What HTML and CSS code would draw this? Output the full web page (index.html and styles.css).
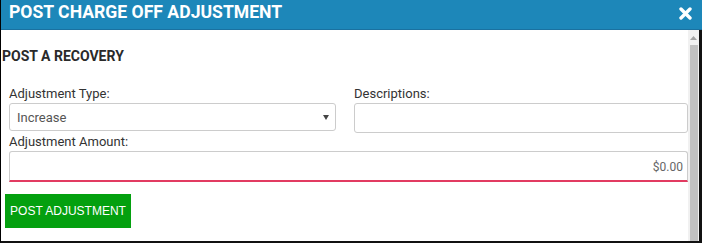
FILE: index.html
```html
<!DOCTYPE html>
<html lang="en">
<head>
    <meta charset="UTF-8">
    <title>Post Charge Off Adjustment</title>
    <link rel="stylesheet" href="styles.css">
</head>
<body>

    <!-- Modal -->
    <div class="modal">
        <div class="modal-header">
            <span class="modal-title">POST CHARGE OFF ADJUSTMENT</span>
            <button class="close" aria-label="Close">
                <svg width="13" height="13" viewBox="0 0 13 13">
                    <path d="M2 2 L11 11 M11 2 L2 11" stroke="#fff" stroke-width="3.4" stroke-linecap="round"/>
                </svg>
            </button>
        </div>

        <div class="modal-body-wrap">
            <div class="modal-body">
                <h3 class="section-title">POST A RECOVERY</h3>

                <div class="form-grid">
                    <div class="field">
                        <label>Adjustment Type:</label>
                        <div class="select-box">
                            <span>Increase</span>
                            <svg class="caret" width="6" height="5" viewBox="0 0 6 5"><path d="M0 0 H6 L3 5 Z" fill="#444"/></svg>
                        </div>
                    </div>
                    <div class="field">
                        <label>Descriptions:</label>
                        <input type="text" class="text-input desc">
                    </div>
                    <div class="field full">
                        <label>Adjustment Amount:</label>
                        <input type="text" class="text-input amount" value="$0.00">
                    </div>
                </div>

                <button class="btn-post">POST ADJUSTMENT</button>
            </div>

            <!-- fake scrollbar -->
            <div class="scrollbar">
                <div class="scroll-up">
                    <svg width="7" height="4" viewBox="0 0 7 4"><path d="M0 4 H7 L3.5 0 Z" fill="#a3a3a3"/></svg>
                </div>
                <div class="scroll-thumb"></div>
            </div>
        </div>
    </div>

</body>
</html>
```

FILE: styles.css
```css
body {
    margin: 0;
    font-family: Roboto, "Liberation Sans", Arial, sans-serif;
    background-color: #fff;
}

.modal {
    width: 702px;
    height: 243px;
    box-sizing: border-box;
    display: flex;
    flex-direction: column;
    border-left: 1px solid #000;
    border-bottom: 2px solid #111;
}

.modal-header {
    height: 30px;
    box-sizing: border-box;
    display: flex;
    justify-content: space-between;
    align-items: flex-start;
    padding: 2px 10px 0 8px;
    background-color: #1d87b9;
    border-bottom: 1px solid #1a71a0;
}

.modal-title {
    color: #fff;
    font-size: 17.6px;
    font-weight: 700;
    line-height: 20px;
}

.close {
    background: none;
    border: none;
    padding: 0;
    margin-top: 5px;
    line-height: 0;
    cursor: pointer;
}

.modal-body-wrap {
    flex: 1;
    display: flex;
    min-height: 0;
    border-right: 3px solid #111;
}

.modal-body {
    flex: 1;
    padding-left: 1px;
}

.section-title {
    margin: 18px 0 21px 0;
    font-size: 14px;
    font-weight: 700;
    line-height: 17px;
    color: #2a2a2a;
}

.form-grid {
    display: grid;
    grid-template-columns: 327px 1fr;
    column-gap: 18px;
    row-gap: 1px;
    padding-left: 7px;
}

.field.full {
    grid-column: 1 / 3;
}

.field label {
    display: block;
    font-size: 13px;
    line-height: 15px;
    color: #333;
    margin-bottom: 2px;
}

.select-box {
    height: 28px;
    box-sizing: border-box;
    display: flex;
    align-items: center;
    justify-content: space-between;
    padding: 0 6px 0 7px;
    border: 1px solid #ccc;
    border-radius: 3px;
    font-size: 13px;
    color: #555;
}

.text-input {
    display: block;
    width: 100%;
    box-sizing: border-box;
    border: 1px solid #ccc;
    border-radius: 3px;
    font-family: Roboto, "Liberation Sans", Arial, sans-serif;
    outline: none;
}

.text-input.desc {
    height: 30px;
}

.text-input.amount {
    height: 31px;
    border-bottom: 2px solid #e23b61;
    border-radius: 3px 3px 0 0;
    text-align: right;
    padding: 2px 4px 0 4px;
    font-size: 12px;
    color: #666;
}

.btn-post {
    margin: 12px 0 0 3px;
    width: 126px;
    height: 34px;
    padding: 0;
    border: none;
    background-color: #04a00f;
    color: #fff;
    font-family: "Liberation Sans", Arial, sans-serif;
    font-size: 12px;
    cursor: pointer;
}

/* fake scrollbar on the right */
.scrollbar {
    width: 11px;
    display: flex;
    flex-direction: column;
    background-color: #f1f1f1;
}

.scroll-up {
    height: 15px;
    display: flex;
    align-items: center;
    justify-content: center;
}

.scroll-thumb {
    flex: 1;
    margin: 0 1px 0 2px;
    background-color: #c1c1c1;
}
```
